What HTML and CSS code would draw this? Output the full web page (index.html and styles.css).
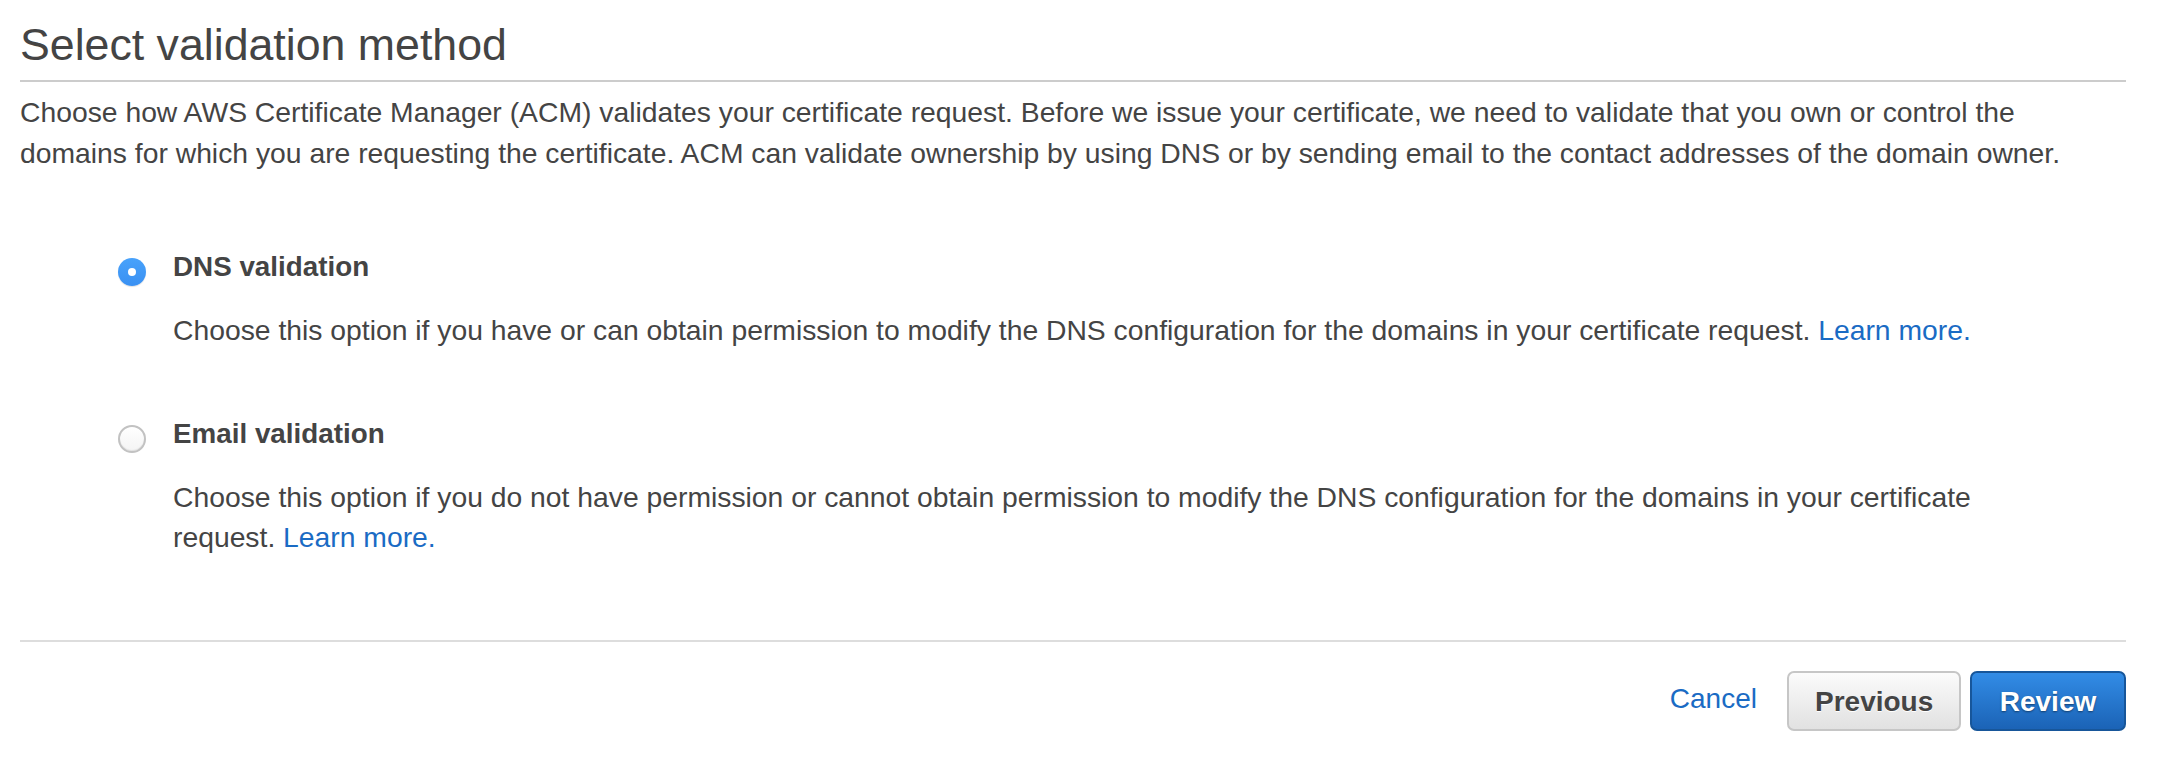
FILE: index.html
```html
<!DOCTYPE html>
<html lang="en">
<head>
<meta charset="utf-8">
<title>Select validation method</title>
<link rel="stylesheet" href="styles.css">
</head>
<body>
<div class="page">
  <h1 class="title">Select validation method</h1>
  <p class="intro">Choose how AWS Certificate Manager (ACM) validates your certificate request. Before we issue your certificate, we need to validate that you own or control the domains for which you are requesting the certificate. ACM can validate ownership by using DNS or by sending email to the contact addresses of the domain owner.</p>

  <div class="options">
    <div class="option">
      <span class="radio radio-checked"></span>
      <div class="option-body">
        <div class="option-title">DNS validation</div>
        <div class="option-desc">Choose this option if you have or can obtain permission to modify the DNS configuration for the domains in your certificate request. <a class="link" href="#">Learn more.</a></div>
      </div>
    </div>
    <div class="option">
      <span class="radio"></span>
      <div class="option-body">
        <div class="option-title">Email validation</div>
        <div class="option-desc">Choose this option if you do not have permission or cannot obtain permission to modify the DNS configuration for the domains in your certificate<br>request. <a class="link" href="#">Learn more.</a></div>
      </div>
    </div>
  </div>

  <div class="footer">
    <a class="link cancel" href="#">Cancel</a>
    <button class="btn btn-secondary" type="button">Previous</button>
    <button class="btn btn-primary" type="button">Review</button>
  </div>
</div>
</body>
</html>
```

FILE: styles.css
```css
html, body {
  margin: 0;
  padding: 0;
  background: #ffffff;
}

body {
  font-family: "Liberation Sans", Arial, Helvetica, sans-serif;
  color: #444444;
}

.page {
  padding: 19px 32px 0 20px;
}

.title {
  margin: 0;
  font-size: 44.7px;
  line-height: 52px;
  font-weight: 400;
  color: #444444;
  padding-bottom: 9px;
  border-bottom: 2px solid #cccccc;
}

.intro {
  margin: 10px 0 0;
  font-size: 28.3px;
  line-height: 41px;
}

.options {
  margin-top: 73px;
  padding-left: 98px;
  display: flex;
  flex-direction: column;
  gap: 64px;
}

.option {
  display: grid;
  grid-template-columns: 28px 1fr;
  column-gap: 27px;
  align-items: start;
}

.radio {
  box-sizing: border-box;
  width: 28px;
  height: 28px;
  margin-top: 11px;
  border-radius: 50%;
  border: 2px solid #c2c2c2;
  background: linear-gradient(#ffffff, #f4f4f4);
  box-shadow: inset 0 -1px 1px rgba(0, 0, 0, 0.08);
  display: flex;
  align-items: center;
  justify-content: center;
}

.radio-checked {
  border: none;
  background: linear-gradient(#48a2fb, #3a90f2);
  box-shadow: 0 1px 1px rgba(0, 0, 0, 0.12);
}

.radio-checked::after {
  content: "";
  width: 8px;
  height: 8px;
  border-radius: 50%;
  background: #ffffff;
}

.option-title {
  font-size: 27.8px;
  line-height: 40px;
  font-weight: 700;
  color: #444444;
}

.option-desc {
  margin-top: 23px;
  font-size: 28.3px;
  line-height: 40px;
}

.link {
  color: #1a6bc4;
  text-decoration: none;
}

.footer {
  margin-top: 83px;
  border-top: 2px solid #dddddd;
  padding-top: 29px;
  display: flex;
  justify-content: flex-end;
  align-items: center;
}

.cancel {
  font-size: 28px;
  line-height: 40px;
  margin-right: 30px;
  padding-bottom: 5px;
}

.btn {
  box-sizing: border-box;
  height: 60px;
  padding: 2px 26px 0;
  border-radius: 7px;
  font-family: "Liberation Sans", Arial, Helvetica, sans-serif;
  font-size: 28px;
  font-weight: 700;
  line-height: 54px;
  cursor: pointer;
}

.btn-secondary {
  width: 174px;
  border: 2px solid #c6c6c6;
  background: linear-gradient(#fbfbfb, #e1e1e1);
  color: #444444;
  text-shadow: 0 1px 0 #ffffff;
}

.btn-primary {
  width: 156px;
  margin-left: 9px;
  border: 2px solid #17569a;
  background: linear-gradient(#328ce6, #1b63b6);
  color: #ffffff;
  text-shadow: 0 1px 2px rgba(0, 0, 0, 0.45);
}
```
